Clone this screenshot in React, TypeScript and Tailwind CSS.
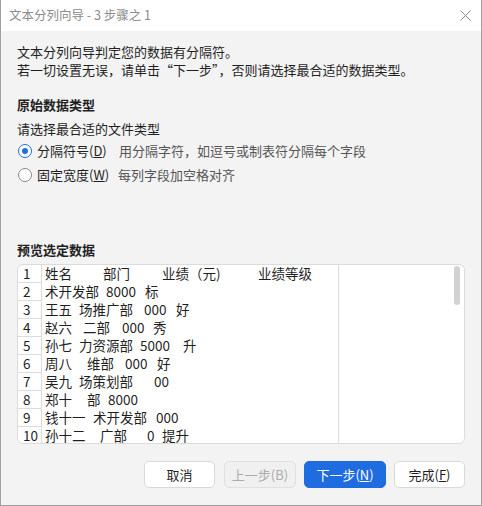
import { Fragment } from "react";

type Token = [string, number];

const rows: Token[][] = [
  [["姓名", 45], ["部门", 103], ["业绩（元)", 162], ["业绩等级", 258]],
  [["术开发部", 45], ["8000", 106], ["标", 145]],
  [["王五", 45], ["场推广部", 79], ["000", 144], ["好", 176]],
  [["赵六", 45], ["二部", 83], ["000", 122], ["秀", 153]],
  [["孙七", 45], ["力资源部", 79], ["5000", 140], ["升", 183]],
  [["周八", 45], ["维部", 87], ["000", 125], ["好", 157]],
  [["吴九", 45], ["场策划部", 79], ["00", 154]],
  [["郑十", 45], ["部", 87], ["8000", 108]],
  [["钱十一", 45], ["术开发部", 93], ["000", 156]],
  [["孙十二", 45], ["广部", 100], ["0", 147], ["提升", 162]],
];

function Radio({ checked }: { checked?: boolean }) {
  return checked ? (
    <span className="w-[14px] h-[14px] rounded-full border-[1.5px] border-[#1f6fe0] bg-white flex items-center justify-center shrink-0">
      <span className="block w-[6px] h-[6px] rounded-full bg-[#1f6fe0]" />
    </span>
  ) : (
    <span className="block w-[14px] h-[14px] rounded-full border border-[#8a8a8a] bg-white shrink-0" />
  );
}

function Button({
  children,
  width,
  variant = "default",
}: {
  children: React.ReactNode;
  width: string;
  variant?: "default" | "primary" | "disabled";
}) {
  const styles = {
    default: "bg-white border-[#d9d9d9] text-[#1f1f1f]",
    primary: "bg-[#1e6ce0] border-[#1e6ce0] text-white",
    disabled: "bg-[#f0f0f0] border-[#e0e0e0] text-[#ababab]",
  }[variant];
  return (
    <div
      className={`${width} h-[27px] rounded-[5px] border flex items-center justify-center text-[13px] ${styles}`}
    >
      {children}
    </div>
  );
}

export default function App() {
  return (
    <div
      className="w-[482px] h-[506px] flex flex-col border-l border-r border-b border-[#a0a0a0] bg-[#f3f3f3] text-[#1f1f1f] overflow-hidden"
      style={{ fontFamily: '"Noto Sans CJK SC", "Liberation Sans", sans-serif' }}
    >
      {/* Title bar */}
      <div className="h-[31px] bg-white flex items-center justify-between pl-[8px] pr-[10px] shrink-0">
        <span className="text-[12.5px] text-[#8c8c8c]">文本分列向导 - 3 步骤之 1</span>
        <svg width="11" height="11" viewBox="0 0 11 11">
          <path d="M0.5 0.5 L10.5 10.5 M10.5 0.5 L0.5 10.5" stroke="#8a8a8a" strokeWidth="1" />
        </svg>
      </div>

      {/* Body */}
      <div className="flex-1 flex flex-col px-[16px] pt-[12px] text-[13px] leading-[18px]">
        <p>文本分列向导判定您的数据有分隔符。</p>
        <p>若一切设置无误，请单击“下一步”，否则请选择最合适的数据类型。</p>

        <h3 className="mt-[17px] font-bold">原始数据类型</h3>
        <p className="mt-[6px]">请选择最合适的文件类型</p>

        <div className="mt-[4px] flex items-center h-[18px]">
          <span className="block ml-[1px]">
            <Radio checked />
          </span>
          <span className="ml-[5px] w-[82px]">
            分隔符号(<span className="underline">D</span>)
          </span>
          <span className="text-[#555555]">用分隔字符，如逗号或制表符分隔每个字段</span>
        </div>
        <div className="mt-[6px] flex items-center h-[18px]">
          <span className="block ml-[1px]">
            <Radio />
          </span>
          <span className="ml-[5px] w-[81px]">
            固定宽度(<span className="underline">W</span>)
          </span>
          <span className="text-[#555555]">每列字段加空格对齐</span>
        </div>

        <h3 className="mt-[57px] font-bold">预览选定数据</h3>

        {/* Preview */}
        <div className="mt-[5px] h-[180px] w-[448px] flex bg-white border border-[#dcdcdc] rounded-[6px] overflow-hidden text-[13.5px]">
          <div className="w-[24px] border-r border-[#dcdcdc] flex flex-col shrink-0">
            {rows.map((_, i) => (
              <div
                key={i}
                className="h-[18px] shrink-0 border-b border-[#dcdcdc] pl-[5px] leading-[17px]"
              >
                {i + 1}
              </div>
            ))}
          </div>
          <div className="w-[297px] border-r border-[#dcdcdc] flex flex-col shrink-0 pl-[3px]">
            {rows.map((row, i) => (
              <div key={i} className="h-[18px] shrink-0 flex leading-[17px] whitespace-nowrap">
                {row.map(([text, x], j) => {
                  const next = row[j + 1];
                  return (
                    <Fragment key={j}>
                      <span
                        className="inline-block shrink-0"
                        style={next ? { width: next[1] - x } : undefined}
                      >
                        {text}
                      </span>
                    </Fragment>
                  );
                })}
              </div>
            ))}
          </div>
          <div className="flex-1 flex justify-end pr-[4px] pt-[1px]">
            <div className="w-[6px] h-[39px] rounded-full bg-[#d2d2d2]" />
          </div>
        </div>

        {/* Buttons */}
        <div className="mt-[17px] flex justify-end gap-[8px] w-[448px]">
          <div className="mr-[1px]">
            <Button width="w-[71px]">取消</Button>
          </div>
          <Button width="w-[72px]" variant="disabled">
            上一步(B)
          </Button>
          <Button width="w-[82px]" variant="primary">
            下一步(<span className="underline">N</span>)
          </Button>
          <Button width="w-[71px]">
            完成(<span className="underline">F</span>)
          </Button>
        </div>
      </div>
    </div>
  );
}
